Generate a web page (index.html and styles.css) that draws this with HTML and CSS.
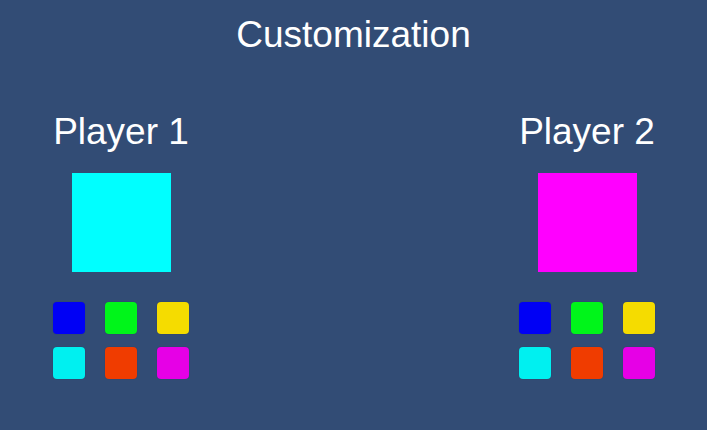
FILE: index.html
```html
<!DOCTYPE html>
<html lang="en">
  <head>
    <meta charset="UTF-8" />
    <meta name="viewport" content="width=device-width, initial-scale=1.0" />
    <title>Customization</title>
    <link rel="stylesheet" href="styles.css">
  </head>
  <body>
    <h1 class="title">Customization</h1>
    <div class="players">
      <div class="player">
        <h2 class="player-name">Player 1</h2>
        <div class="preview cyan-big"></div>
        <div class="swatches">
          <button type="button" class="swatch blue"></button>
          <button type="button" class="swatch green"></button>
          <button type="button" class="swatch yellow"></button>
          <button type="button" class="swatch cyan"></button>
          <button type="button" class="swatch red"></button>
          <button type="button" class="swatch magenta"></button>
        </div>
      </div>
      <div class="player">
        <h2 class="player-name">Player 2</h2>
        <div class="preview magenta-big"></div>
        <div class="swatches">
          <button type="button" class="swatch blue"></button>
          <button type="button" class="swatch green"></button>
          <button type="button" class="swatch yellow"></button>
          <button type="button" class="swatch cyan"></button>
          <button type="button" class="swatch red"></button>
          <button type="button" class="swatch magenta"></button>
        </div>
      </div>
    </div>
  </body>
</html>
```

FILE: styles.css
```css
body {
  background-color: #324c75;
  font-family: "Liberation Sans", Arial, sans-serif;
  color: #ffffff;
  margin: 0;
  min-height: 100vh;
}

.title {
  margin: 0;
  padding-top: 14px;
  font-size: 37px;
  line-height: 42px;
  font-weight: 400;
  text-align: center;
}

.players {
  display: flex;
  justify-content: space-between;
  padding: 55px 52px 0 53px;
}

.player {
  display: flex;
  flex-direction: column;
  align-items: center;
  width: 136px;
}

.player-name {
  margin: 0;
  font-size: 37px;
  line-height: 42px;
  font-weight: 400;
  white-space: nowrap;
}

.preview {
  width: 99px;
  height: 99px;
  margin-top: 20px;
}

.cyan-big {
  background-color: #00ffff;
}

.magenta-big {
  background-color: #ff00ff;
}

.swatches {
  display: grid;
  grid-template-columns: repeat(3, 32px);
  column-gap: 20px;
  row-gap: 13px;
  margin-top: 30px;
}

.swatch {
  width: 32px;
  height: 32px;
  padding: 0;
  border: none;
  border-radius: 4px;
  box-shadow: 0 0 1px rgba(20, 30, 60, 0.3);
  cursor: pointer;
}

.blue {
  background-color: #0000f5;
}

.green {
  background-color: #00f51a;
}

.yellow {
  background-color: #f5dc00;
}

.cyan {
  background-color: #00f0f0;
}

.red {
  background-color: #f03c00;
}

.magenta {
  background-color: #e600e6;
}
```
